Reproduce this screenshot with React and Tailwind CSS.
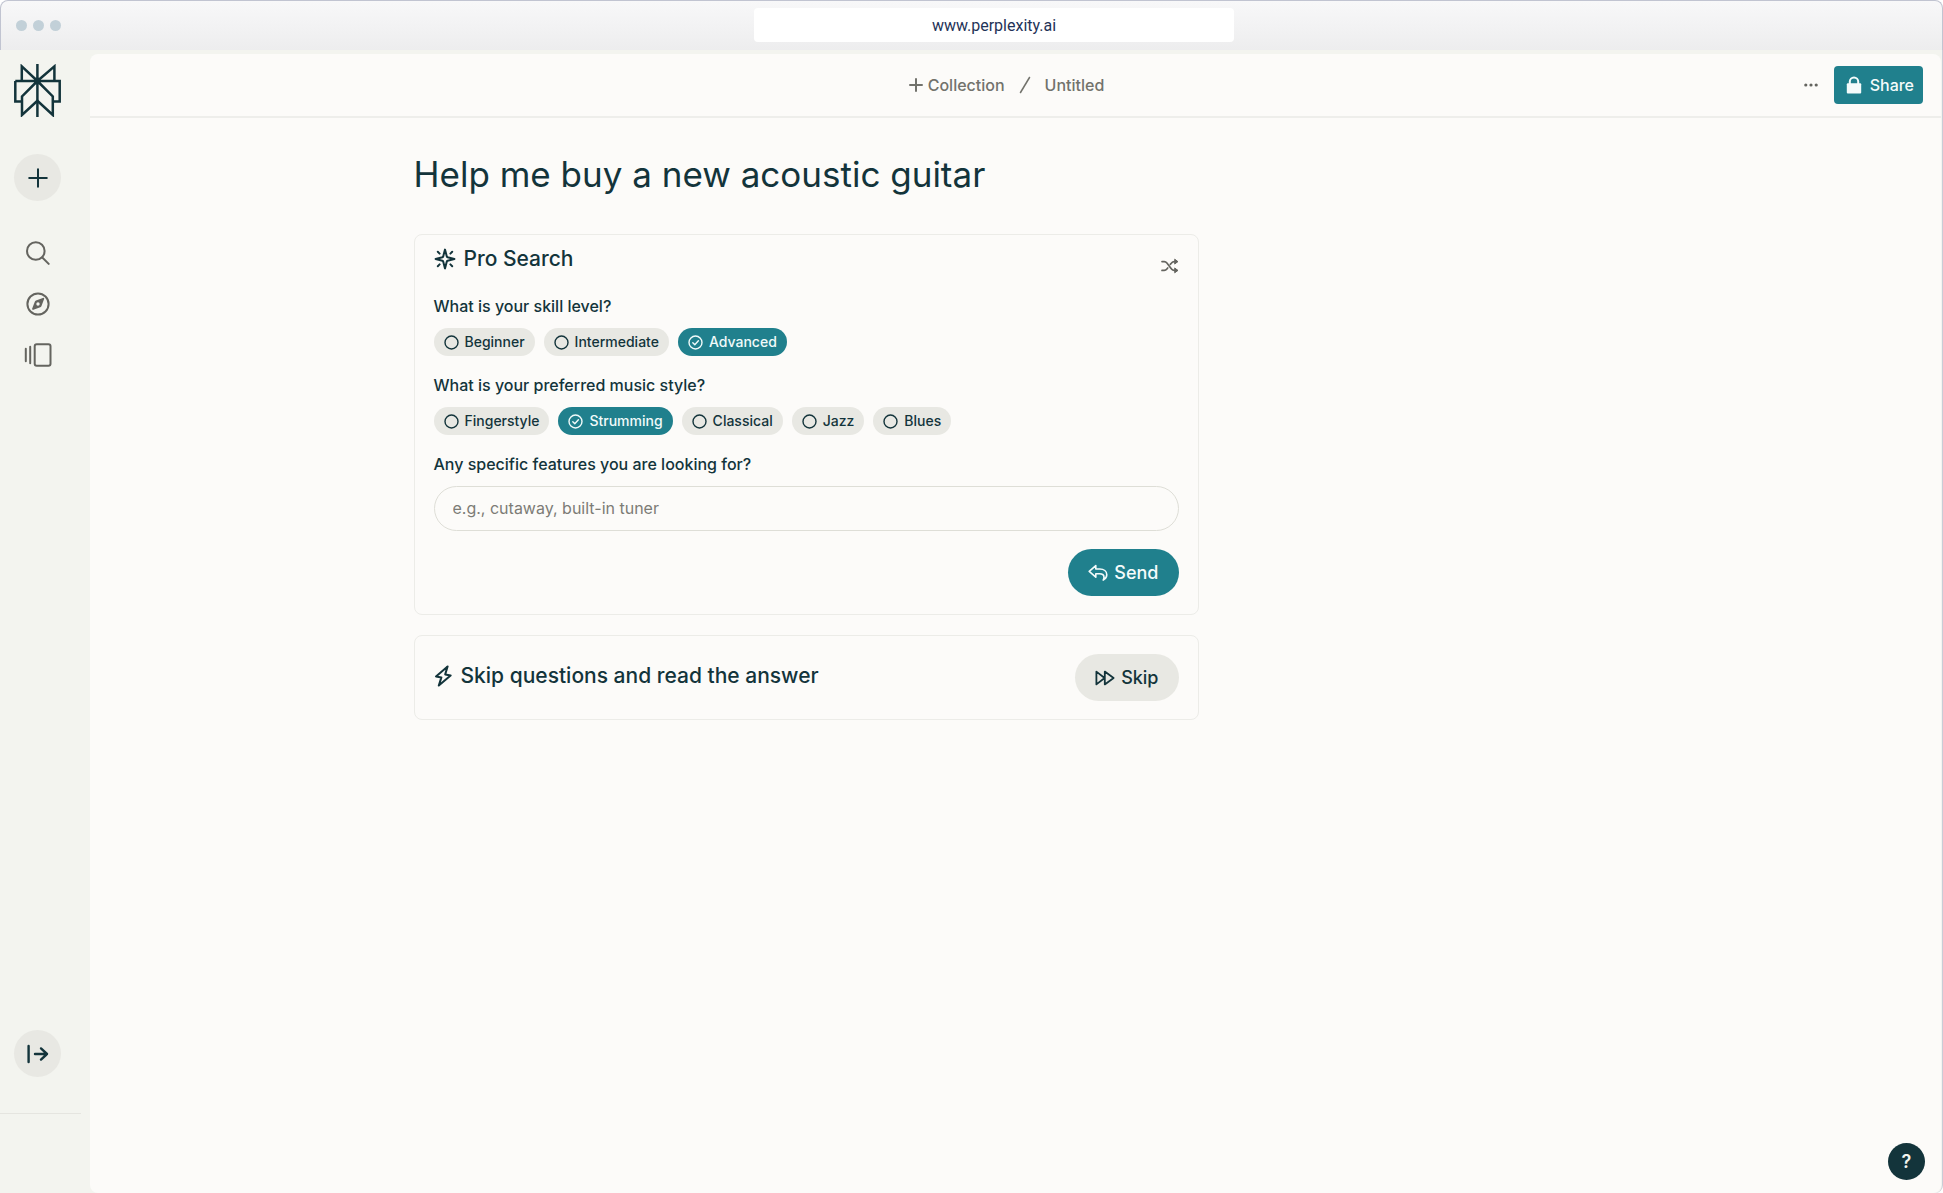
import React, { useState } from "react";

const SKILL_LEVELS = ["Beginner", "Intermediate", "Advanced"];
const MUSIC_STYLES = ["Fingerstyle", "Strumming", "Classical", "Jazz", "Blues"];

const Logo = () => (
  <svg viewBox="0 0 47 53" className="h-[53px] w-[47px]" fill="none" stroke="currentColor" strokeWidth="2.5">
    <path d="M23.4 0v53" />
    <path d="M1.3 17h44.4v20.4h-7M1.3 17v20.4h6.7" />
    <path d="M23.4 17 7.8 2.4V17M23.4 17 40.4 2.4V17" />
    <path d="M23.4 17 8 32.4V51l15.4-14.2L38.8 51V32.4L23.4 17" />
    <circle cx="23.4" cy="17" r="3.4" fill="currentColor" stroke="none" />
  </svg>
);

const SearchIcon = () => (
  <svg viewBox="0 0 24 24" className="size-6" fill="none" stroke="currentColor" strokeWidth="2" strokeLinecap="round">
    <circle cx="9.8" cy="10" r="8.8" />
    <path d="m16.3 16.5 6.4 6.4" />
  </svg>
);

const CompassIcon = () => (
  <svg viewBox="0 0 24 24" className="size-6" fill="none" stroke="currentColor" strokeWidth="2">
    <circle cx="12" cy="12" r="10.6" />
    <path
      d="M16.9 5.9 10 8.5a2 2 0 0 0-1.2 1.2L6.2 16.6a.9.9 0 0 0 1.2 1.2l6.9-2.6a2 2 0 0 0 1.2-1.2l2.6-6.9a.9.9 0 0 0-1.2-1.2zM12 10.3a1.7 1.7 0 1 1 0 3.4 1.7 1.7 0 0 1 0-3.4z"
      fill="currentColor"
      stroke="none"
      fillRule="evenodd"
    />
  </svg>
);

const LibraryIcon = () => (
  <svg viewBox="0 0 28 24" className="h-6 w-7" fill="none" stroke="currentColor" strokeWidth="2" strokeLinecap="round">
    <path d="M1.8 5.7v12.6M6.2 3.7v16.6" />
    <rect x="10.7" y="1.2" width="15.8" height="21.6" rx="2" />
  </svg>
);

const ProIcon = () => (
  <svg viewBox="0 0 22 22" className="size-[22px]" fill="none" stroke="currentColor" strokeWidth="2" strokeLinecap="round" strokeLinejoin="round">
    <path d="M11 1.6 12.8 8.4q.2.600.8.800L20.400 11l-6.800 1.800q-.6.200-.8.800L11 20.400 9.200 13.600q-.2-.6-.8-.8L1.600 11l6.800-1.800q.6-.2.8-.8z" />
    <path d="m3.800 3.800 1.800 1.800M18.200 3.800l-1.800 1.800M3.800 18.200l1.800-1.800M18.200 18.200l-1.800-1.800" />
  </svg>
);

const ShuffleIcon = () => (
  <svg viewBox="0 0 18 16" className="h-4 w-[18px]" fill="none" stroke="currentColor" strokeWidth="1.7" strokeLinecap="round" strokeLinejoin="round">
    <path d="M1 3.600h2.200c1.200 0 2 .5 2.700 1.400l4.600 6c.7.900 1.500 1.400 2.700 1.400H16" />
    <path d="M1 12.400h2.200c1.200 0 2-.5 2.700-1.400l.8-1M9.300 6.400l1.200-1.400c.7-.9 1.500-1.400 2.700-1.400H16" />
    <path d="m14 1.400 2.800 2.200L14 5.800zM14 10.200l2.800 2.200-2.800 2.200z" fill="currentColor" strokeWidth="1" />
  </svg>
);

const ReplyIcon = () => (
  <svg viewBox="0 0 20 18" className="h-[18px] w-5" fill="none" stroke="currentColor" strokeWidth="1.6" strokeLinejoin="round">
    <path d="M7.800 1.600 1.200 7.400l6.600 5.800V9.800h3.600c2.800 0 4.600 1.200 4.600 3.400 0 1-.3 2-.8 2.900 2.200-1.200 3.600-3 3.600-5.300 0-3.600-3-5.800-7-5.800h-4z" />
  </svg>
);

const ForwardIcon = () => (
  <svg viewBox="0 0 20 16" className="h-4 w-5" fill="none" stroke="currentColor" strokeWidth="1.8" strokeLinejoin="round">
    <path d="M1.400 1.600 9.600 8l-8.200 6.400zM9.800 1.600 18.600 8l-8.800 6.400z" />
  </svg>
);

const BoltIcon = () => (
  <svg viewBox="0 0 18 22" className="h-[22px] w-[18px]" fill="none" stroke="currentColor" strokeWidth="2" strokeLinejoin="round">
    <path d="M13.600 1.400 2 11.400l5.400 1L4.800 20.600 16.600 10.400l-5.400-1z" />
  </svg>
);

const LockIcon = () => (
  <svg viewBox="0 0 16 18" className="h-[18px] w-4" fill="none" stroke="currentColor" strokeWidth="2">
    <path d="M3.800 8V5.600a4.200 4.200 0 0 1 8.400 0V8" />
    <rect x="0.8" y="7.2" width="14.4" height="10.4" rx="1" fill="currentColor" stroke="none" />
  </svg>
);

const ExpandIcon = () => (
  <svg viewBox="0 0 22 20" className="h-5 w-[22px]" fill="none" stroke="currentColor" strokeWidth="2.4" strokeLinecap="round" strokeLinejoin="round">
    <path d="M1.600 2v16M8 10h12M14 4.400l6 5.600-6 5.600" />
  </svg>
);

const ChipGroup = ({ name, question, options, value, onChange }) => (
  <fieldset className="mb-[17px]">
    <legend className="mb-[10px] text-base leading-6 font-medium">{question}</legend>
    <div className="flex flex-wrap gap-[9px]">
      {options.map((option) => (
        <label
          key={option}
          className="flex h-7 cursor-pointer items-center gap-[6px] rounded-full bg-[#e8e8e3] px-[10px] text-sm font-medium has-checked:bg-[#20808d] has-checked:text-[#f0fafa]"
        >
          <span className="grid place-items-center">
            <input
              type="radio"
              name={name}
              checked={value === option}
              onChange={() => onChange(option)}
              className="size-[15px] appearance-none rounded-full [grid-area:1/1]"
            />
            <svg viewBox="0 0 15 15" className="pointer-events-none size-[15px] [grid-area:1/1]" fill="none" stroke="currentColor" strokeWidth="1.4" strokeLinecap="round" strokeLinejoin="round">
              <circle cx="7.5" cy="7.5" r="6.5" />
              {value === option && <path d="m4.8 7.700 2 2 3.600-4" />}
            </svg>
          </span>
          {option}
        </label>
      ))}
    </div>
  </fieldset>
);

const Sidebar = () => (
  <aside className="flex w-[90px] shrink-0 flex-col">
    <a href="#home" aria-label="Home" className="mt-[10px] ml-[14px] self-start text-[#13343b]">
      <Logo />
    </a>
    <button aria-label="New thread" className="mt-[37px] ml-[14px] grid size-[47px] place-items-center rounded-full bg-[#e8e8e3] text-[#13343b]">
      <svg viewBox="0 0 20 20" className="size-5" fill="none" stroke="currentColor" strokeWidth="2" strokeLinecap="round">
        <path d="M10 1.200v17.600M1.200 10h17.600" />
      </svg>
    </button>
    <nav className="mt-[26px] flex w-[75px] flex-col text-[#64645f]">
      <a href="#search" aria-label="Search" className="grid h-[51px] place-items-center">
        <SearchIcon />
      </a>
      <a href="#discover" aria-label="Discover" className="grid h-[51px] place-items-center">
        <CompassIcon />
      </a>
      <a href="#library" aria-label="Library" className="grid h-[51px] place-items-center">
        <LibraryIcon />
      </a>
    </nav>
    <button aria-label="Expand sidebar" className="mt-auto mb-9 ml-[14px] grid size-[47px] place-items-center rounded-full bg-[#e8e8e3] text-[#13343b]">
      <ExpandIcon />
    </button>
    <div className="mr-[9px] h-20 border-t border-[#e5e5e0]" />
  </aside>
);

const Header = () => (
  <header className="grid h-16 grid-cols-[1fr_auto_1fr] items-center border-b-2 border-[#eeeeeb] pr-[18px] text-[#72726c]">
    <nav className="col-start-2 flex items-center text-base font-medium">
      <button className="flex items-center gap-[5px]">
        <svg viewBox="0 0 14 14" className="size-[14px]" fill="none" stroke="currentColor" strokeWidth="2" strokeLinecap="round">
          <path d="M7 1v12M1 7h12" />
        </svg>
        Collection
      </button>
      <svg viewBox="0 0 12 18" className="mx-[14px] h-[18px] w-3" fill="none" stroke="currentColor" strokeWidth="1.5">
        <path d="M1.200 17 10.800 1" />
      </svg>
      <a href="#untitled">Untitled</a>
    </nav>
    <div className="flex items-center justify-end gap-4">
      <button aria-label="More options">
        <svg viewBox="0 0 14 4" className="h-1 w-[14px]" fill="#64645f">
          <circle cx="1.8" cy="2" r="1.600" />
          <circle cx="7" cy="2" r="1.600" />
          <circle cx="12.2" cy="2" r="1.600" />
        </svg>
      </button>
      <button className="flex h-[38px] items-center gap-2 rounded bg-[#20808d] pr-[9px] pl-3 text-base font-medium text-[#f4fbfb]">
        <LockIcon />
        Share
      </button>
    </div>
  </header>
);

const App = () => {
  const [skill, setSkill] = useState("Advanced");
  const [style, setStyle] = useState("Strumming");
  const [features, setFeatures] = useState("");

  return (
    <div className="flex min-h-screen flex-col bg-white font-[Inter,sans-serif] text-[#13343b]">
      <div className="flex h-[50px] items-center rounded-t-lg border border-b-0 border-[#c1c4d1] bg-linear-to-b from-[#f8f8f9] to-[#ededee] px-[15px]">
        <div className="flex gap-[6px]">
          <span className="size-[11px] rounded-full bg-[#c2d0d8]" />
          <span className="size-[11px] rounded-full bg-[#c2d0d8]" />
          <span className="size-[11px] rounded-full bg-[#c2d0d8]" />
        </div>
        <div className="flex flex-1 justify-center pb-px">
          <input
            aria-label="Address"
            defaultValue="www.perplexity.ai"
            className="h-[34px] w-full max-w-[480px] rounded bg-white text-center font-[Roboto,sans-serif] text-base text-[#1f3358] outline-none"
          />
        </div>
      </div>

      <div className="flex flex-1 rounded-br-lg border-r border-[#c9cbd6] bg-[#f3f4ef] pt-1">
        <Sidebar />
        <main className="mr-px flex-1 rounded-lg bg-[#fcfbf9]">
          <Header />
          <div className="mx-auto max-w-[1204px] pt-[34px]">
            <h1 className="text-[35px] leading-[44px]">Help me buy a new acoustic guitar</h1>

            <div className="mt-[38px] flex max-w-[785px] flex-col gap-5">
              <form
                onSubmit={(e) => e.preventDefault()}
                className="rounded-lg border border-[#ecece8] px-[19px] pb-[18px]"
              >
                <div className="mb-[5px] flex h-[54px] items-center justify-between">
                  <h2 className="mb-[6px] flex items-center gap-2 text-[21px] leading-[30px] font-medium">
                    <ProIcon />
                    Pro Search
                  </h2>
                  <button type="button" aria-label="Shuffle" className="mt-2 text-[#64645f]">
                    <ShuffleIcon />
                  </button>
                </div>
                <ChipGroup
                  name="skill"
                  question="What is your skill level?"
                  options={SKILL_LEVELS}
                  value={skill}
                  onChange={setSkill}
                />
                <ChipGroup
                  name="style"
                  question="What is your preferred music style?"
                  options={MUSIC_STYLES}
                  value={style}
                  onChange={setStyle}
                />
                <label htmlFor="features" className="mb-[10px] block text-base leading-6 font-medium">
                  Any specific features you are looking for?
                </label>
                <input
                  id="features"
                  type="text"
                  value={features}
                  onChange={(e) => setFeatures(e.target.value)}
                  placeholder="e.g., cutaway, built-in tuner"
                  className="h-[45px] w-full rounded-full border border-[#deded7] px-[18px] pb-[2px] text-base outline-none placeholder:text-[#7c7c76]"
                />
                <div className="mt-[18px] flex justify-end">
                  <button className="flex h-[47px] items-center gap-[6px] rounded-full bg-[#20808d] px-5 text-lg font-medium text-[#f4fbfb]">
                    <ReplyIcon />
                    Send
                  </button>
                </div>
              </form>

              <section className="flex items-center justify-between rounded-lg border border-[#ecece8] px-[19px] py-[18px]">
                <h2 className="mb-1 flex items-center gap-[9px] text-[21px] leading-[30px] font-medium">
                  <BoltIcon />
                  Skip questions and read the answer
                </h2>
                <button className="flex h-[47px] items-center gap-[6px] rounded-full bg-[#e8e8e3] px-5 text-lg font-medium">
                  <ForwardIcon />
                  Skip
                </button>
              </section>
            </div>
          </div>
        </main>
      </div>

      <button aria-label="Help" className="fixed right-[18px] bottom-[13px] size-[37px] rounded-full bg-[#13343b] text-lg font-semibold text-[#f3f4ef]">
        ?
      </button>
    </div>
  );
};

export default App;
